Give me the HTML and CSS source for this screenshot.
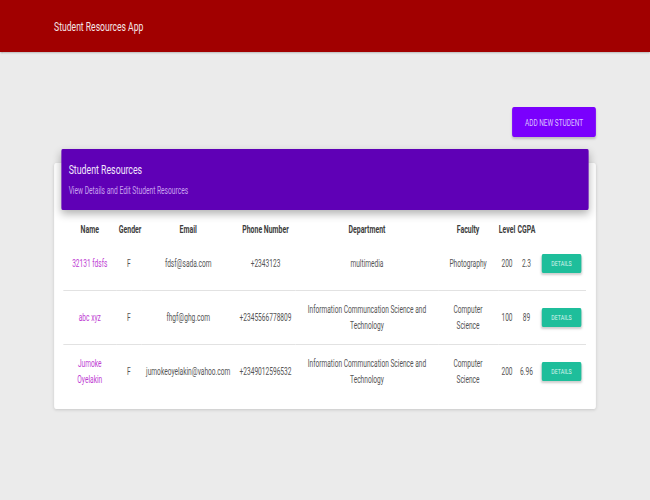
FILE: index.html
```html
<!DOCTYPE html>
<html lang="en">
<head>
<meta charset="utf-8">
<title>Student Resources App</title>
<link rel="stylesheet" href="styles.css">
</head>
<body>
<div class="viewport">
<div class="app">
  <header class="topbar"><span class="brand">Student Resources App</span></header>
  <main class="content">
    <div class="actions"><button class="btn-add">ADD NEW STUDENT</button></div>
    <section class="card">
      <div class="card-header">
        <h4 class="card-title">Student Resources</h4>
        <p class="card-category">View Details and Edit Student Resources</p>
      </div>
      <div class="card-body">
        <table class="students">
          <colgroup>
            <col class="c-name"><col class="c-gender"><col class="c-email"><col class="c-phone"><col class="c-dept"><col class="c-fac"><col class="c-level"><col class="c-cgpa"><col class="c-act">
          </colgroup>
          <thead>
            <tr><th>Name</th><th>Gender</th><th>Email</th><th>Phone Number</th><th>Department</th><th>Faculty</th><th class="tight">Level</th><th class="tight">CGPA</th><th></th></tr>
          </thead>
          <tbody>
            <tr>
              <td><a class="name">32131 fdsfs</a></td><td>F</td><td>fdsf@sada.com</td><td>+2343123</td><td>multimedia</td><td class="fac">Photography</td><td class="tight">200</td><td class="tight">2.3</td><td><button class="btn-details">DETAILS</button></td>
            </tr>
            <tr>
              <td><a class="name">abc xyz</a></td><td>F</td><td>fhgf@ghg.com</td><td>+2345566778809</td><td>Information Communcation Science and Technology</td><td class="fac">Computer Science</td><td class="tight">100</td><td class="tight">89</td><td><button class="btn-details">DETAILS</button></td>
            </tr>
            <tr>
              <td><a class="name">Jumoke Oyelakin</a></td><td>F</td><td>jumokeoyelakin@vahoo.com</td><td>+2349012596532</td><td>Information Communcation Science and Technology</td><td class="fac">Computer Science</td><td class="tight">200</td><td class="tight">6.96</td><td><button class="btn-details">DETAILS</button></td>
            </tr>
          </tbody>
        </table>
      </div>
    </section>
  </main>
</div>
</div>
</body>
</html>
```
FILE: styles.css
```css
html, body {
  margin: 0;
  padding: 0;
  background: #ebebeb;
  overflow: hidden;
  height: 100%;
}
body {
  font-family: Roboto, "Liberation Sans", Arial, sans-serif;
}
.viewport {
  width: 650px;
  height: 500px;
  overflow: hidden;
}
.app {
  width: 985px;
  transform: scaleX(0.6599);
  transform-origin: 0 0;
}
.topbar {
  height: 52px;
  background: #a10000;
  display: flex;
  align-items: center;
  padding-left: 82px;
  box-shadow: 0 1px 2px rgba(0,0,0,0.25);
}
.brand {
  color: #f4e6e6;
  font-size: 13px;
}
.content {
  padding: 55px 82px 0 82px;
}
.actions {
  display: flex;
  justify-content: flex-end;
}
.btn-add {
  width: 127px;
  height: 30px;
  border: none;
  border-radius: 3px;
  background: #7a00fd;
  color: #dcc4ff;
  font-family: inherit;
  font-size: 9.8px;
  box-shadow: 0 2px 3px rgba(0,0,0,0.2);
  padding: 0;
}
.card {
  margin-top: 26px;
  background: #fff;
  border-radius: 3px;
  box-shadow: 0 1px 4px rgba(0,0,0,0.15);
}
.card-header {
  position: relative;
  top: -14px;
  margin: 0 11px -14px 11px;
  background: #5f00b6;
  border-radius: 2px;
  padding: 13px 11px 13px 11px;
  box-shadow: 0 4px 10px rgba(0,0,0,0.3);
}
.card-title {
  margin: 0;
  font-size: 13.3px;
  line-height: 16px;
  font-weight: 400;
  color: #f1e6fb;
}
.card-category {
  margin: 7px 0 0 0;
  font-size: 10.1px;
  line-height: 12px;
  color: #c8a1ee;
}
.card-body {
  padding: 9px 15px 11px 14px;
}
.students {
  width: 792px;
  table-layout: fixed;
  border-collapse: collapse;
}
.c-name { width: 80px; }
.c-gender { width: 38px; }
.c-email { width: 142px; }
.c-phone { width: 92px; }
.c-dept { width: 215px; }
.c-fac { width: 91px; }
.c-level { width: 27px; }
.c-cgpa { width: 32px; }
.c-act { width: 74px; }
.students th {
  height: 14px;
  padding: 4px 4px 0 4px;
  font-size: 10.5px;
  line-height: 14px;
  font-weight: 700;
  color: #3d3d3d;
  text-align: center;
  vertical-align: top;
  white-space: nowrap;
}
.students td {
  height: 53px;
  padding: 0 4px;
  font-size: 10px;
  line-height: 15.5px;
  color: #555;
  text-align: center;
  vertical-align: middle;
}
.students tbody tr + tr td {
  border-top: 1px solid #e2e2e2;
}
.students .tight {
  padding-left: 0;
  padding-right: 0;
  white-space: nowrap;
}
.students td.fac {
  padding: 0 12px;
}
.name {
  color: #be3dd3;
  text-decoration: none;
}
.btn-details {
  width: 60px;
  height: 19px;
  border: none;
  border-radius: 2px;
  background: #1ebe9b;
  color: #d9f5ee;
  font-family: inherit;
  font-size: 8px;
  padding: 0;
  box-shadow: 0 2px 3px rgba(0,0,0,0.2);
}
```
